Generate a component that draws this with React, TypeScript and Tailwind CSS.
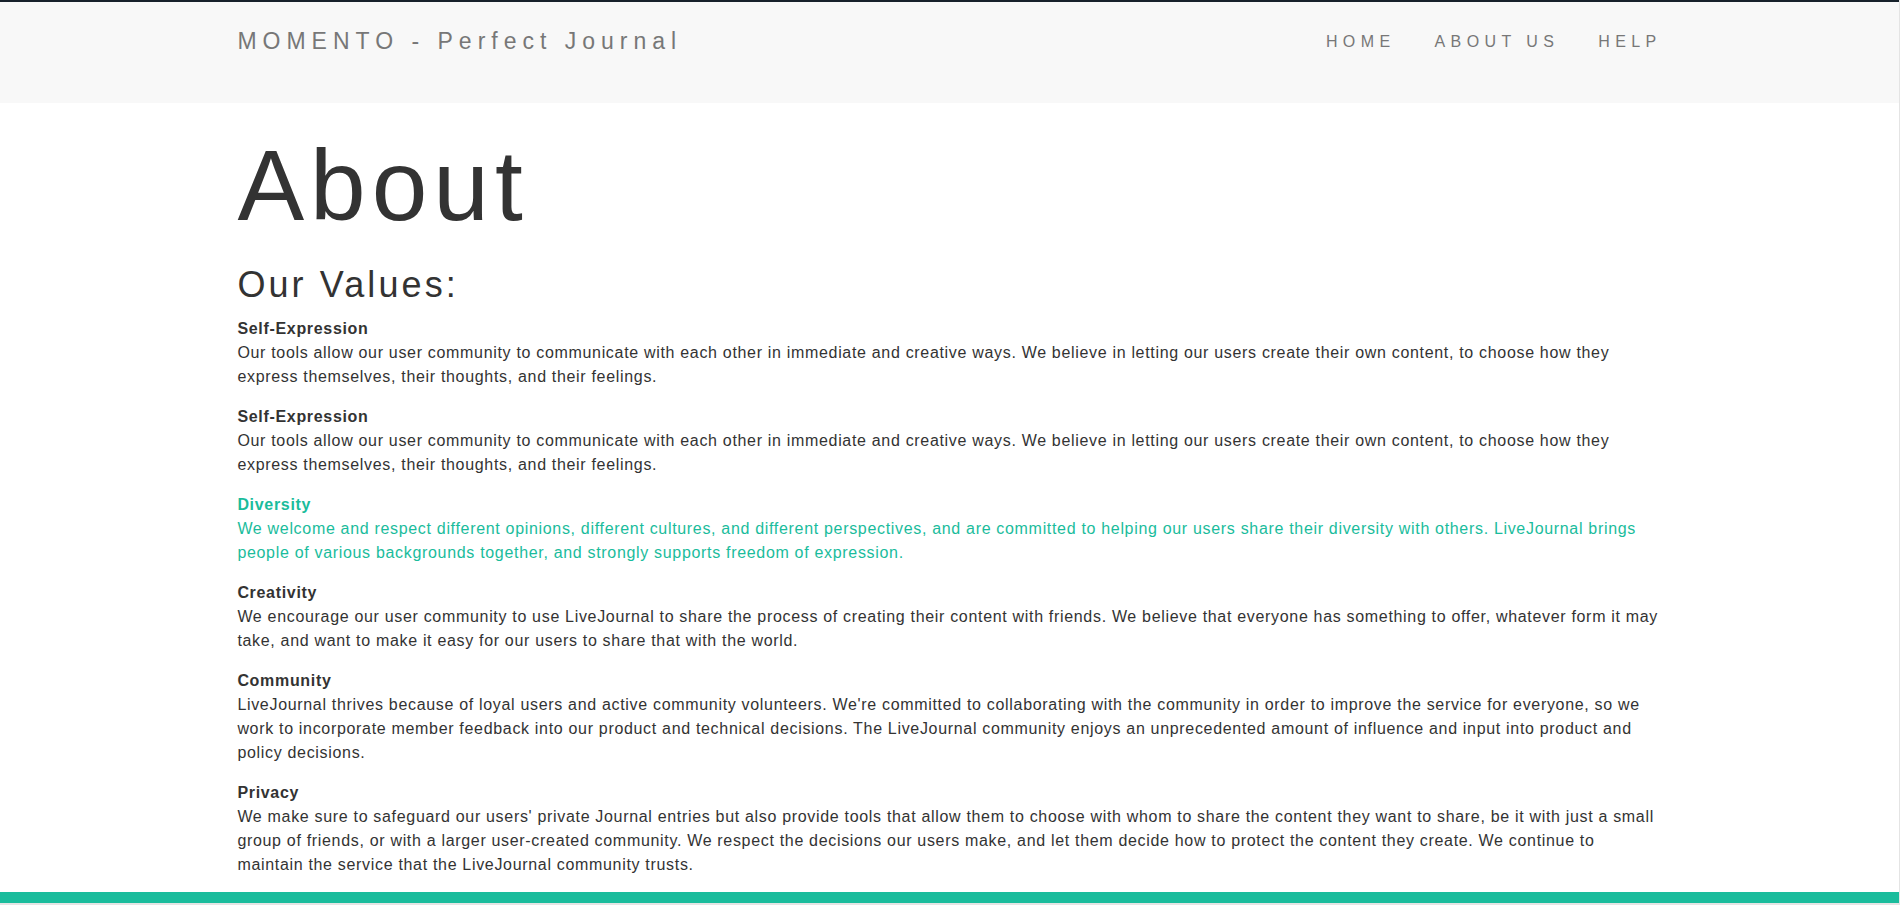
const values = [
  {
    title: 'Self-Expression',
    text: 'Our tools allow our user community to communicate with each other in immediate and creative ways. We believe in letting our users create their own content, to choose how they express themselves, their thoughts, and their feelings.',
  },
  {
    title: 'Self-Expression',
    text: 'Our tools allow our user community to communicate with each other in immediate and creative ways. We believe in letting our users create their own content, to choose how they express themselves, their thoughts, and their feelings.',
  },
  {
    title: 'Diversity',
    text: 'We welcome and respect different opinions, different cultures, and different perspectives, and are committed to helping our users share their diversity with others. LiveJournal brings people of various backgrounds together, and strongly supports freedom of expression.',
    active: true,
  },
  {
    title: 'Creativity',
    text: 'We encourage our user community to use LiveJournal to share the process of creating their content with friends. We believe that everyone has something to offer, whatever form it may take, and want to make it easy for our users to share that with the world.',
  },
  {
    title: 'Community',
    text: "LiveJournal thrives because of loyal users and active community volunteers. We're committed to collaborating with the community in order to improve the service for everyone, so we work to incorporate member feedback into our product and technical decisions. The LiveJournal community enjoys an unprecedented amount of influence and input into product and policy decisions.",
  },
  {
    title: 'Privacy',
    text: "We make sure to safeguard our users' private Journal entries but also provide tools that allow them to choose with whom to share the content they want to share, be it with just a small group of friends, or with a larger user-created community. We respect the decisions our users make, and let them decide how to protect the content they create. We continue to maintain the service that the LiveJournal community trusts.",
  },
];

export default function App() {
  return (
    <div className="min-h-screen flex flex-col bg-white border-r border-[#e4e4e4] font-['Liberation_Sans',Arial,sans-serif] text-[#333]">
      <div className="h-[2px] bg-[#17212b]"></div>
      <header className="h-[101px] bg-[#f8f8f8]">
        <div className="w-3/4 mx-auto flex justify-between">
          <a href="#" className="pt-[23px] text-[23px] leading-[32px] tracking-[6px] text-[#777]">
            MOMENTO - Perfect Journal
          </a>
          <nav className="pt-[28px] flex gap-[39px] text-[16px] leading-[24px] tracking-[5.4px] text-[#777]">
            <a href="#">HOME</a>
            <a href="#">ABOUT US</a>
            <a href="#">HELP</a>
          </nav>
        </div>
      </header>

      <main className="w-3/4 mx-auto">
        <h1 className="mt-[27px] text-[100px] leading-[110px] tracking-[6px] text-[#333]">About</h1>
        <h2 className="mt-[25px] text-[36px] leading-[40px] tracking-[3.1px] text-[#333]">Our Values:</h2>
        <div className="mt-[12px] flex flex-col gap-4 tracking-[0.68px]">
          {values.map((v, i) => (
            <div key={i} className={v.active ? 'text-[#1abc9c]' : 'text-[#333]'}>
              <h3 className="text-[16px] leading-[24px] font-bold">{v.title}</h3>
              <p className="text-[16px] leading-[24px]">{v.text}</p>
            </div>
          ))}
        </div>
      </main>

      <footer className="mt-auto h-[11px] bg-[#1abc9c]"></footer>
      <div className="h-[2px] bg-[#e4e4e4]"></div>
    </div>
  );
}
